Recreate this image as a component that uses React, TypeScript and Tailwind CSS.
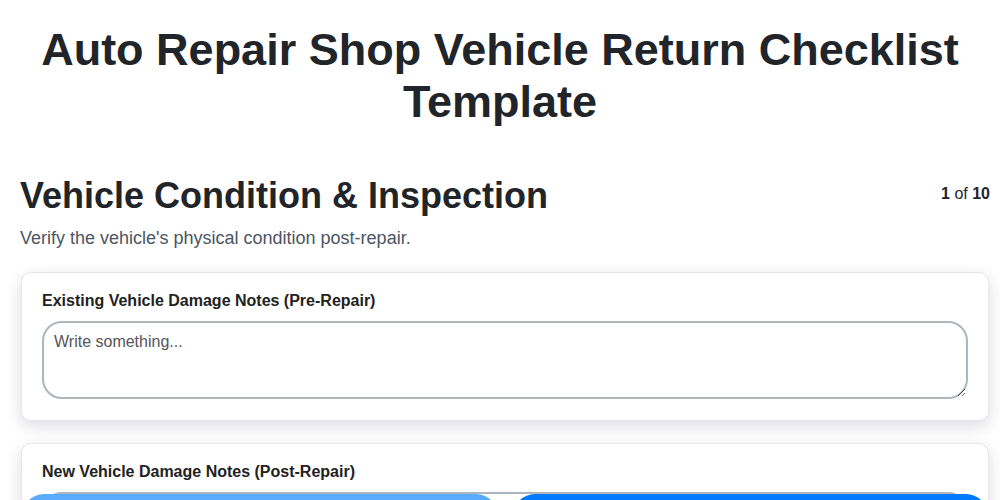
import React from "react";

function Card({ label }: { label: string }) {
  return (
    <div className="rounded-[10px] border border-[#e6e6ee] bg-white px-[20px] pt-[17px] pb-[21px] shadow-[0_5px_15px_rgba(40,40,70,0.16)]">
      <label className="mb-[9px] block text-[16px] font-bold leading-[22px] text-[#222]">{label}</label>
      <textarea
        placeholder="Write something..."
        className="block h-[78px] w-full resize-y rounded-[20px] border-2 border-[#adb5bd] bg-white px-[10px] py-[8px] text-[16px] leading-[22px] text-[#222] placeholder:text-[#555] outline-none"
      />
    </div>
  );
}

export default function App() {
  return (
    <div className="min-h-[500px] bg-white pl-[20px] pr-[10px] font-['Liberation_Sans',Arial,sans-serif] text-[#212529]">
      <h1 className="mr-[10px] pt-[24px] text-center text-[45px] font-bold leading-[52px] text-[#212529]">
        Auto Repair Shop Vehicle Return Checklist Template
      </h1>
      <div className="mt-[46px] flex items-start justify-between">
        <h2 className="text-[36px] font-bold leading-[44px] text-[#212529]">Vehicle Condition &amp; Inspection</h2>
        <div className="mt-[8px] text-[16px] text-[#212529]">
          <span className="font-bold">1</span> of <span className="font-bold">10</span>
        </div>
      </div>
      <p className="mt-[7px] text-[18px] leading-[26px] text-[#4b5563]">Verify the vehicle's physical condition post-repair.</p>
      <div className="mt-[21px] flex flex-col gap-[22px] px-px">
        <Card label="Existing Vehicle Damage Notes (Pre-Repair)" />
        <Card label="New Vehicle Damage Notes (Post-Repair)" />
      </div>
      <div className="fixed left-0 right-0 top-[494px] flex gap-[15px] pl-[22px] pr-[12px]">
        <button className="h-[44px] flex-1 rounded-full bg-[#5aabff] pt-[20px] text-white font-bold">Previous</button>
        <button className="h-[44px] flex-1 rounded-full bg-[#007bff] pt-[20px] text-white font-bold">Next</button>
      </div>
    </div>
  );
}
